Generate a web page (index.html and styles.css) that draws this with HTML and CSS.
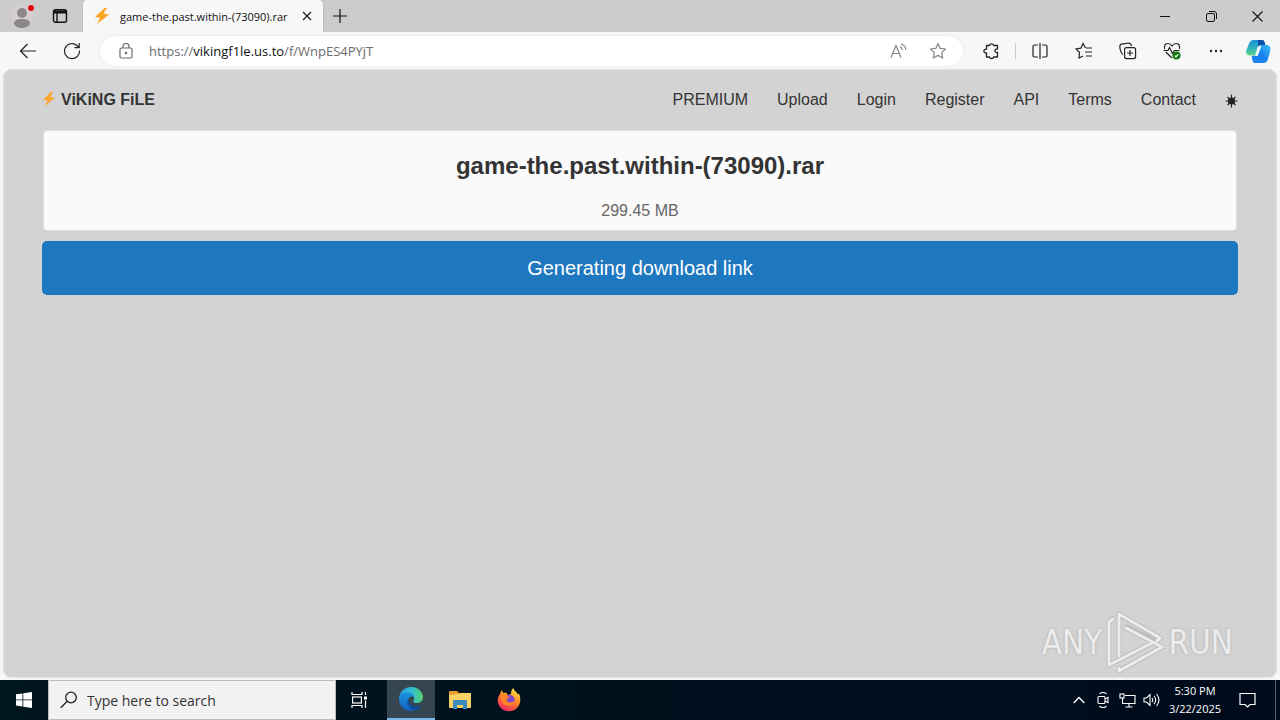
FILE: index.html
```html
<!DOCTYPE html>
<html lang="en">
<head>
<meta charset="utf-8">
<title>game-the.past.within-(73090).rar</title>
<link rel="stylesheet" href="styles.css">
</head>
<body>
<header class="titlebar">
  <button class="profile" aria-label="Profile">
    <svg width="28" height="28" viewBox="0 0 28 28"><circle cx="14" cy="14" r="11" fill="#d5d0cf"/><circle cx="14" cy="11" r="5" fill="#8b8887"/><path d="M6 22c0-4 3-5 8-5s8 1 8 5c-2 3-5 4-8 4s-6-1-8-4z" fill="#8b8887"/><circle cx="23" cy="6" r="4" fill="#e5d0d0"/><circle cx="23" cy="6" r="3" fill="#dc0010"/></svg>
  </button>
  <button class="tab-actions" aria-label="Tab actions">
    <svg width="16" height="16" viewBox="0 0 16 16" fill="none" stroke="#111" stroke-width="1.4"><rect x="1.5" y="1.7" width="13" height="12.6" rx="2"/><path d="M1.5 4h13" stroke-width="3"/><path d="M5 5v9"/></svg>
  </button>
  <div class="tab">
    <svg width="16" height="16" viewBox="0 0 16 16"><path d="M10.5 0 1 9l5.2.8L3 16 15 6.4 9.3 5.6 13 0z" fill="#fba61f"/></svg>
    <span class="tab-title">game-the.past.within-(73090).rar</span>
    <button class="tab-close" aria-label="Close tab"><svg width="10" height="10" viewBox="0 0 10 10" stroke="#222" stroke-width="1.3"><path d="m1 1 8 8M9 1 1 9"/></svg></button>
  </div>
  <button class="new-tab" aria-label="New tab"><svg width="14" height="14" viewBox="0 0 14 14" stroke="#111" stroke-width="1.2"><path d="M7 0v14M0 7h14"/></svg></button>
  <div class="window-controls">
    <button aria-label="Minimize"><svg width="10" height="10" viewBox="0 0 10 10" stroke="#111"><path d="M0 5.5h10"/></svg></button>
    <button aria-label="Restore"><svg width="11" height="11" viewBox="0 0 11 11" fill="none" stroke="#111"><rect x=".5" y="2.5" width="8" height="8" rx="1.5"/><path d="M3 .5h5c1.500 0 2.500 1 2.500 2.500V8"/></svg></button>
    <button aria-label="Close"><svg width="11" height="11" viewBox="0 0 11 11" stroke="#111" stroke-width="1.1"><path d="m.5.5 10 10M10.500.5l-10 10"/></svg></button>
  </div>
</header>

<div class="toolbar">
  <button class="tool" aria-label="Back"><svg width="18" height="16" viewBox="0 0 18 16" fill="none" stroke="#222" stroke-width="1.2"><path d="M17 8H1.500M8.500 1l-7 7 7 7"/></svg></button>
  <button class="tool" aria-label="Refresh"><svg width="18" height="18" viewBox="0 0 18 18" fill="none" stroke="#222" stroke-width="1.200"><path d="M16.500 8.500A7.500 7.500 0 1 1 14 3.500L16 5.500M16.200 1v4.700h-4.700"/></svg></button>
  <div class="address">
    <svg class="lock" width="14" height="16" viewBox="0 0 14 16" fill="none" stroke="#6b6b6b" stroke-width="1.200"><rect x="1" y="5" width="12" height="10" rx="1.500"/><path d="M4 5V3.500a3 3 0 0 1 6 0V5"/><circle cx="7" cy="10" r=".7" fill="#6b6b6b"/></svg>
    <div class="url"><span>https://</span><b>vikingf1le.us.to</b><span>/f/WnpES4PYjT</span></div>
    <button class="inner" aria-label="Read aloud"><svg width="18" height="16" viewBox="0 0 18 16" fill="none" stroke="#858585" stroke-width="1.200"><path d="m2 14.500 5-12 5 12M3.700 10.500h6.600M11 3.500c1.500.7 2.200 1.800 2.300 3.500M12 .8c3 1.200 4.700 3.200 4.800 6.200"/></svg></button>
    <button class="inner" aria-label="Add to favorites"><svg width="18" height="18" viewBox="0 0 18 18" fill="none" stroke="#858585" stroke-width="1.200" stroke-linejoin="round"><path d="m9 1.500 2.200 4.900 5.300.6-3.900 3.600 1.100 5.400L9 13.400 4.300 16l1.100-5.400L1.500 7l5.300-.6z"/></svg></button>
  </div>
  <button class="tool" aria-label="Extensions"><svg width="18" height="18" viewBox="0 0 18 18" fill="none" stroke="#222" stroke-width="1.300" stroke-linejoin="round"><path d="M4.500 3.500h3a2.200 2.200 0 0 1 4.200 0H15.500V7c-3.500-.5-3.500 4 0 3.500v4.500h-3.800a2.200 2.200 0 0 1-4.200 0h-3v-4C1 11.500 1 7 4.500 7.200z"/></svg></button>
  <span class="divider"></span>
  <button class="tool" aria-label="Split screen"><svg width="16" height="16" viewBox="0 0 16 16" fill="none" stroke="#222" stroke-width="1.200"><path d="M6 2H2.500Q1 2 1 3.500v9Q1 14 2.500 14H6M10 2h3.500Q15 2 15 3.500v9q0 1.500-1.500 1.500H10M8 0v16"/></svg></button>
  <button class="tool" aria-label="Favorites"><svg width="18" height="18" viewBox="0 0 18 18" fill="none" stroke="#222" stroke-width="1.200"><path d="M10.500 6 8 1.500 5.800 6.200 1 7l3.500 3.500L4 16l4-2M11 6h6M10 10h7M11 14h6"/></svg></button>
  <button class="tool" aria-label="Collections"><svg width="18" height="18" viewBox="0 0 18 18" fill="none" stroke="#222" stroke-width="1.200"><path d="M4 12.500C1.500 11 .5 5.500 1 3.500S3 2 4.500 1.800l5-.8c2 0 2.500 1 3 3"/><rect x="5.600" y="5.600" width="11" height="11" rx="2"/><path d="M11 8v6M8 11h6"/></svg></button>
  <button class="tool" aria-label="Browser essentials"><svg width="18" height="18" viewBox="0 0 18 18" fill="none" stroke="#222" stroke-width="1.200"><path d="M1.600 7C.5 3 3 1.500 5 1.500s3 1.200 4 2.500c1-1.300 2-2.500 4-2.500S17.500 3 16.500 7M2.800 10 9 16M.5 8.500H5l1.500-3 3 6 2-3h5"/><circle cx="13.500" cy="13.500" r="4" fill="#107c10" stroke="none"/><path d="m11.800 13.700 1.200 1.200 2.300-2.500" stroke="#fff"/></svg></button>
  <button class="tool" aria-label="More"><svg width="14" height="4" viewBox="0 0 14 4" fill="#222"><circle cx="2" cy="2" r="1.200"/><circle cx="7" cy="2" r="1.200"/><circle cx="12" cy="2" r="1.200"/></svg></button>
  <button class="tool copilot" aria-label="Copilot"><svg width="25" height="23" viewBox="0 0 25 23">
    <defs><linearGradient id="ca" x1="0" y1="0" x2="0" y2="1"><stop offset="0" stop-color="#1690d8"/><stop offset=".6" stop-color="#35b8ba"/><stop offset="1" stop-color="#60d883"/></linearGradient><linearGradient id="cb" x1="1" y1="0" x2="0" y2="1"><stop offset="0" stop-color="#3ac0f5"/><stop offset=".5" stop-color="#1b80f0"/><stop offset="1" stop-color="#1787f0"/></linearGradient></defs>
    <path d="M8 0h8c2 0 2.700 2 3.300 4.500L12 6l-3 9.500H4C.5 15.500-.5 13 .5 10L3 3.500C4 1 5.500 0 8 0z" fill="url(#ca)"/><path d="M12 0h4c2 0 2.700 2 3.300 5H15c-1.500 0-2.200.5-3 2z" fill="#0f4fa8"/><path d="M17 23H9c-2.500 0-2.500-3-3.500-6.500L9 15.500c2 0 3-1 3.500-3L15 5h5c4 0 5 2.500 4.200 6l-2.200 8c-1 3-2.500 4-5 4z" fill="url(#cb)"/><path d="m12.500 7-3.300 9h2.500l3.600-9.500z" fill="#eaf9ff"/></svg></button>
</div>

<div class="viewport">
  <main class="page">
    <nav class="nav">
      <a class="brand" href="#"><svg width="14" height="16" viewBox="0 0 14 16"><path d="M9 0 1 7.500l4.500.9L3 14 13 5.700 8.500 5 11 0z" fill="#fba632"/></svg><span>ViKiNG FiLE</span></a>
      <div class="links">
        <a href="#">PREMIUM</a><a href="#">Upload</a><a href="#">Login</a><a href="#">Register</a><a href="#">API</a><a href="#">Terms</a><a href="#">Contact</a>
        <button class="theme" aria-label="Toggle theme"><svg width="13" height="16" viewBox="0 0 13 16" stroke="#222" stroke-width="1.100"><circle cx="6.500" cy="9" r="3" fill="#222"/><path d="M6.500 2.500v13M.5 9h12M2.500 5l8 8M10.500 5l-8 8"/></svg></button>
      </div>
    </nav>
    <section class="file">
      <h1>game-the.past.within-(73090).rar</h1>
      <p>299.45 MB</p>
    </section>
    <button class="download">Generating download link</button>
  </main>
  <div class="watermark">
    <span>ANY</span>
    <svg width="58" height="64" viewBox="0 0 58 64" fill="none" stroke-linejoin="round" stroke-linecap="round"><g stroke="#bebebe" stroke-width="5"><path d="M7 9 3 12v43l43-22M13 46V4l41 24-3 3-30-14M13 58v3l43-24-36-19"/></g><g stroke="#ececec" stroke-width="3"><path d="M7 9 3 12v43l43-22M13 46V4l41 24-3 3M13 58v3l43-24-36-19"/></g></svg>
    <span>RUN</span>
  </div>
</div>

<footer class="taskbar">
  <button class="start" aria-label="Start"><svg width="16" height="16" viewBox="0 0 16 16" fill="#fff"><path d="m0 2.300 6.500-.9v6.100H0zM7.300 1.300 16 0v7.500H7.300zM0 8.300h6.500v6.200L0 13.600zM7.300 8.300H16V16l-8.700-1.300z"/></svg></button>
  <label class="search"><svg width="18" height="18" viewBox="0 0 18 18" fill="none" stroke="#222" stroke-width="1.300"><circle cx="11" cy="6.500" r="5.300"/><path d="m7.200 10.300-6.500 6.500"/></svg><input type="text" placeholder="Type here to search" aria-label="Type here to search"></label>
  <button class="app" aria-label="Task view"><svg width="18" height="16" viewBox="0 0 18 16" fill="none" stroke="#fff" stroke-width="1.200"><path d="M1 0v2.500h10V0M1 16v-2.500h10V16M14.500 0v3M14.500 8.500V16"/><rect x="1.600" y="5" width="8.800" height="6"/><path d="M14.500 4.500v3" stroke-width="3"/></svg></button>
  <button class="app active" aria-label="Microsoft Edge"><svg width="24" height="24" viewBox="0 0 24 24">
    <defs><linearGradient id="ea" x1="0" x2="1"><stop offset="0" stop-color="#2795dd"/><stop offset=".55" stop-color="#2fc0d0"/><stop offset="1" stop-color="#58d070"/></linearGradient><linearGradient id="eb" x1="0" y1="0" x2="0" y2="1"><stop offset="0" stop-color="#1b91dc"/><stop offset="1" stop-color="#1461bd"/></linearGradient></defs>
    <path d="M0 11C1 4 6 0 12 0c7 0 12 5 12 10 0 4-3 6-6.500 6-3 0-4-1-3-2.500 2-3 0-6-4-6C6 7.500 2 9 0 14z" fill="url(#ea)"/><path d="M0 12c0-4 4-6.500 8.500-6.500 4 0 6.500 2 6.500 5C13 8.500 9 10 9 14c0 4 4.500 7 12.500 5C18 23 15 24 12 24 5 24 0 19 0 12z" fill="url(#eb)"/><path d="M9 12c-2 5 1 10 7 11.500 3-.8 5-3 6-5-6 2.500-12-.5-13-6.500z" fill="#0d4f9c"/></svg></button>
  <button class="app" aria-label="File Explorer"><svg width="22" height="18" viewBox="0 0 22 18"><path d="M0 1Q0 0 1 0h7l2 2h11v15H0z" fill="#e5a02c"/><path d="M0 4 10 3l1-1h11v15H0z" fill="#f8d065"/><path d="M4 10q0-1 1-1h12q1 0 1 1v8h-4v-4H8v4H4z" fill="#3c8abf"/></svg></button>
  <button class="app" aria-label="Firefox"><svg width="24" height="24" viewBox="0 0 24 24">
    <defs><linearGradient id="fa" x1=".8" y1="0" x2=".3" y2="1"><stop offset="0" stop-color="#fff044"/><stop offset=".45" stop-color="#ff8b24"/><stop offset="1" stop-color="#f32463"/></linearGradient></defs>
    <path d="M3 6 4.500 2l2 3L9 4.500 11 7l3-1c0-3 1-5 2.500-6 .5 3 3.500 4 4.500 6.500l1-1C24 10 24 16 20 20c-5 5-13 4-17-1C0 15 0 10 3 6z" fill="url(#fa)"/><circle cx="12.500" cy="12" r="5.200" fill="#8148d0"/><path d="M3 7c3-1 6 0 7 1l3 1c-1 1.500-3 1-3.500 3 1 3 5 3 8 1-1 5-6 6-9 4-3-1-5-5-5.500-10z" fill="#ff8427"/></svg></button>
  <div class="tray">
    <button aria-label="Show hidden icons"><svg width="12" height="8" viewBox="0 0 12 8" fill="none" stroke="#fff" stroke-width="1.300"><path d="m.7 7 5.300-5.500L11.300 7"/></svg></button>
    <button aria-label="Meet now"><svg width="12" height="16" viewBox="0 0 12 16" fill="none" stroke="#fff" stroke-width="1.100"><rect x="1" y="4.500" width="7" height="7" rx="1"/><path d="m8 7 3-1.500v5L8 9M2.500 1.800c2-1.500 5-1.500 7 0M2.500 14.200c2 1.500 5 1.500 7 0"/></svg></button>
    <button aria-label="Network"><svg width="17" height="15" viewBox="0 0 17 15" fill="none" stroke="#fff" stroke-width="1.100"><path d="M6 2.500h10v8H3.500V5M10 10.500V14M6.500 14h7"/><rect x="1" y="1" width="4" height="4"/></svg></button>
    <button aria-label="Volume"><svg width="17" height="14" viewBox="0 0 17 14" fill="none" stroke="#fff" stroke-width="1.100"><path d="M1 5h2.500L7 1.500v11L3.500 9H1zM9 5q1.500 2 0 4M11 3q3.500 4 0 8M13.500 1q5 6 0 12"/></svg></button>
    <div class="clock"><time>5:30 PM</time><time>3/22/2025</time></div>
    <button class="notify" aria-label="Notifications"><svg width="17" height="17" viewBox="0 0 17 17" fill="none" stroke="#fff" stroke-width="1.200"><path d="M1 1.500h15v11h-5L8.500 15 6 12.500H1z"/></svg></button>
    <span class="peek"></span>
  </div>
</footer>
</body>
</html>
```
FILE: styles.css
```css
* { box-sizing: border-box; }
body { margin: 0; min-height: 100vh; display: flex; flex-direction: column; background: #f7f7f7; font-family: "Open Sans", "Noto Sans", sans-serif; color: #111; }
button { border: 0; padding: 0; margin: 0; background: none; font: inherit; color: inherit; display: flex; align-items: center; justify-content: center; }
a { color: inherit; text-decoration: none; }
svg { display: block; flex: none; }

.titlebar { height: 32px; display: flex; background: #ccc; }
.profile { width: 44px; }
.tab-actions { width: 32px; margin-right: 7px; }
.tab { width: 240px; padding: 0 8px 0 11px; display: flex; align-items: center; gap: 10px; background: #f7f7f7; border-radius: 4px 4px 0 0; box-shadow: 0 0 2px #999; clip-path: inset(0 -3px 0 -3px); }
.tab-title { flex: 1; min-width: 0; font-size: 11px; white-space: nowrap; }
.tab-close { width: 16px; height: 16px; }
.new-tab { width: 34px; }
.window-controls { margin-left: auto; display: flex; }
.window-controls button { width: 46px; }

.toolbar { height: 38px; padding: 0 2px 0 6px; display: flex; align-items: center; background: #f7f7f7; }
.tool { width: 44px; height: 32px; flex: none; }
.copilot { width: 40px; }
.divider { width: 1px; height: 16px; margin: 0 2px; background: #ccc; }
.address { flex: 1; height: 30px; margin: 0 6px; padding: 0 5px 0 19px; display: flex; align-items: center; background: #fff; border-radius: 15px; box-shadow: 0 0 2px #ddd; }
.url { flex: 1; margin-left: 16px; font-size: 13px; color: #6b6b6b; white-space: nowrap; }
.url b { font-weight: 400; color: #111; }
.inner { width: 40px; height: 28px; }

.viewport { flex: 1; padding: 0 4px 3px; display: flex; position: relative; background: #f7f7f7; }
.page { flex: 1; padding: 0 38px; background: #d3d3d3; border-radius: 8px; box-shadow: 0 0 2px #aaa; font-family: "Liberation Sans", Arial, sans-serif; }
.nav { height: 60px; display: flex; align-items: center; justify-content: space-between; font-size: 16px; color: #333; }
.brand { display: flex; align-items: center; gap: 5px; color: #333; font-weight: 700; }
.links { display: flex; align-items: center; gap: 29px; }
.file { height: 101px; margin: 0 1px; padding: 20px 16px 0; background: #fafafa; border: 1px solid #dedede; border-radius: 4px; text-align: center; }
.file h1 { margin: 0; font-size: 24px; line-height: 30px; color: #333; }
.file p { margin: 20px 0 0; font-size: 16px; line-height: 20px; color: #666; }
.download { width: 100%; height: 54px; margin-top: 10px; background: #1e78bf; color: #fff; font-size: 20px; border-radius: 5px; }

.watermark { position: absolute; right: 47px; bottom: 6px; display: flex; align-items: center; gap: 4px; font-family: "DejaVu Sans Condensed", "DejaVu Sans", sans-serif; font-size: 33px; color: #ececec; text-shadow: 0 0 3px #aaa; pointer-events: none; }

.taskbar { height: 40px; display: flex; background: #00101c linear-gradient(90deg, #00161f, #000b1c); color: #fff; }
.start { width: 48px; }
.search { width: 288px; padding: 0 11px; display: flex; align-items: center; gap: 9px; background: #f2f2f2; border: 1px solid #bbb; }
.search input { flex: 1; min-width: 0; border: 0; padding: 0; outline: 0; background: none; font: inherit; font-size: 14px; }
.search input::placeholder { color: #333; opacity: 1; }
.app { width: 48px; margin-left: 1px; }
.app.active { background: #35464f; border-bottom: 2px solid #76b9ed; }
.app:nth-of-type(2) { margin-left: 0; margin-right: 2px; }
.tray { margin-left: auto; display: flex; }
.tray button { width: 24px; }
.clock { width: 64px; display: flex; flex-direction: column; justify-content: center; text-align: center; font-size: 11px; line-height: 18px; white-space: nowrap; }
.tray .notify { width: 40px; }
.peek { width: 1px; margin: 0 4px 0 8px; background: #56606b; }
```
